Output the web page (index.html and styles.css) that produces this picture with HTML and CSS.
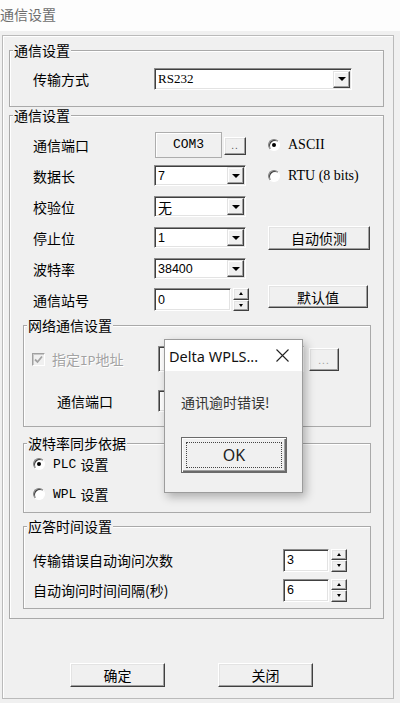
FILE: index.html
```html
<!DOCTYPE html>
<html lang="zh-CN">
<head>
    <meta charset="UTF-8">
    <meta name="viewport" content="width=device-width, initial-scale=1.0">
    <title>通信设置</title>
    <link rel="stylesheet" href="styles.css">
</head>
<body>
    <div class="titlebar">通信设置</div>

    <div class="frame">
        <fieldset class="group g-mode">
            <legend>通信设置</legend>
            <div class="body">
                <div class="row">
                    <span class="lbl">传输方式</span>
                    <div class="combo wide"><span class="val serif">RS232</span><span class="drop"></span></div>
                </div>
            </div>
        </fieldset>

        <fieldset class="group g-comm">
            <legend>通信设置</legend>
            <div class="body">
                <div class="row">
                    <span class="lbl">通信端口</span>
                    <div class="ctl">
                        <span class="com">COM3</span>
                        <span class="btn dots">..</span>
                    </div>
                    <span class="opt"><span class="rb on"></span><span class="serif">ASCII</span></span>
                </div>
                <div class="row">
                    <span class="lbl">数据长</span>
                    <div class="ctl"><div class="combo"><span class="val">7</span><span class="drop"></span></div></div>
                    <span class="opt"><span class="rb"></span><span class="serif">RTU (8 bits)</span></span>
                </div>
                <div class="row">
                    <span class="lbl">校验位</span>
                    <div class="ctl"><div class="combo"><span class="val cjk">无</span><span class="drop"></span></div></div>
                </div>
                <div class="row">
                    <span class="lbl">停止位</span>
                    <div class="ctl"><div class="combo"><span class="val">1</span><span class="drop"></span></div></div>
                    <span class="btn side">自动侦测</span>
                </div>
                <div class="row">
                    <span class="lbl">波特率</span>
                    <div class="ctl"><div class="combo"><span class="val">38400</span><span class="drop"></span></div></div>
                </div>
                <div class="row">
                    <span class="lbl">通信站号</span>
                    <div class="ctl">
                        <div class="spin">
                            <span class="edit station">0</span>
                            <span class="spinner"><span class="btn up"></span><span class="btn down"></span></span>
                        </div>
                    </div>
                    <span class="btn side default">默认值</span>
                </div>

                <fieldset class="group g-net">
                    <legend>网络通信设置</legend>
                    <div class="body">
                        <div class="row">
                            <span class="nlbl">
                                <span class="chk">
                                    <svg width="9" height="9" viewBox="0 0 9 9"><path d="M1 4.5 L3.5 7 L8 1.5" fill="none" stroke="#a3a3a3" stroke-width="1.8"/></svg>
                                </span>
                                <span class="dim">指定<span class="mono">IP</span>地址</span>
                            </span>
                            <span class="edit ip"></span>
                            <span class="btn browse">...</span>
                        </div>
                        <div class="row">
                            <span class="nlbl indent">通信端口</span>
                            <span class="edit port"></span>
                        </div>
                    </div>
                </fieldset>

                <fieldset class="group g-baud">
                    <legend>波特率同步依据</legend>
                    <div class="body">
                        <div class="row"><span class="rb on"></span><span class="mono">PLC</span>&nbsp;设置</div>
                        <div class="row"><span class="rb"></span><span class="mono">WPL</span>&nbsp;设置</div>
                    </div>
                </fieldset>

                <fieldset class="group g-resp">
                    <legend>应答时间设置</legend>
                    <div class="body">
                        <div class="row">
                            <span class="rlbl">传输错误自动询问次数</span>
                            <div class="spin">
                                <span class="edit small">3</span>
                                <span class="spinner"><span class="btn up"></span><span class="btn down"></span></span>
                            </div>
                        </div>
                        <div class="row">
                            <span class="rlbl">自动询问时间间隔(秒)</span>
                            <div class="spin">
                                <span class="edit small">6</span>
                                <span class="spinner"><span class="btn up"></span><span class="btn down"></span></span>
                            </div>
                        </div>
                    </div>
                </fieldset>
            </div>
        </fieldset>

        <div class="actions">
            <span class="btn action">确定</span>
            <span class="btn action">关闭</span>
        </div>
    </div>

    <div class="msgbox">
        <div class="msg-title">
            <span>Delta WPLS...</span>
            <svg width="13" height="13" viewBox="0 0 13 13"><path d="M0.5 0.5 L12.5 12.5 M12.5 0.5 L0.5 12.5" stroke="#222" stroke-width="1.1"/></svg>
        </div>
        <div class="msg-body">
            <p class="msg-text">通讯逾时错误!</p>
            <span class="ok"><span class="focus">OK</span></span>
        </div>
    </div>
</body>
</html>
```

FILE: styles.css
```css
body {
    margin: 0;
    width: 400px;
    height: 703px;
    overflow: hidden;
    position: relative;
    background-color: #f0f0f0;
    font-family: "Noto Sans CJK SC", sans-serif;
    font-size: 14px;
    color: #000;
}
.titlebar {
    height: 31px;
    line-height: 29px;
    background-color: #fdfdfd;
    color: #6e6e6e;
}
.frame {
    box-sizing: border-box;
    width: 392px;
    margin: 4px 0 0 2px;
    padding: 7px 9px 11px 6px;
    border: 1px solid #bababa;
    box-shadow: inset 1px 1px #fff;
}
.serif {
    font-family: "Liberation Serif", serif;
}
.mono {
    font-family: "Liberation Mono", monospace;
    font-size: 13px;
}

/* group boxes */
.group {
    margin: 0;
    padding: 0;
    min-width: 0;
    border: 1px solid #a9a9a9;
    box-shadow: inset 1px 1px #fff;
}
.group legend {
    margin-left: 3px;
    padding: 0 1px;
    line-height: 15px;
    background-color: #f0f0f0;
}
.row {
    display: flex;
    align-items: center;
    height: 31px;
}
.lbl {
    width: 121px;
    flex: none;
}
.ctl {
    width: 114px;
    flex: none;
    display: flex;
    align-items: center;
}

.g-mode .body {
    padding: 10px 0 16px 23px;
}
.g-mode .row {
    height: 22px;
}
.g-comm {
    margin-top: 1px;
}
.g-comm > .body {
    padding: 6px 12px 9px 13px;
}
.g-comm > .body > .row {
    padding-left: 10px;
}

/* inputs */
.combo,
.edit {
    box-sizing: border-box;
    display: flex;
    align-items: center;
    background-color: #fff;
    border: 1px solid;
    border-color: #8c8c8c #fff #fff #8c8c8c;
    box-shadow: inset 1px 1px #404040, inset -1px -1px #e3e3e3;
    font-family: "Liberation Sans", sans-serif;
    font-size: 12.5px;
}
.combo {
    width: 92px;
    height: 21px;
}
.combo.wide {
    width: 198px;
    height: 22px;
}
.combo .val {
    flex: 1;
    padding-left: 3px;
}
.combo .val.serif {
    font-family: "Liberation Serif", serif;
    font-size: 13px;
}
.combo .val.cjk {
    font-family: "Noto Sans CJK SC", sans-serif;
    font-size: 14px;
}
.btn {
    box-sizing: border-box;
    display: flex;
    align-items: center;
    justify-content: center;
    background-color: #f0f0f0;
    border: 1px solid;
    border-color: #fff #404040 #404040 #fff;
    box-shadow: inset -1px -1px #a0a0a0, inset 1px 1px #e3e3e3;
}
.drop {
    box-sizing: border-box;
    width: 17px;
    height: 17px;
    margin-right: 1px;
    display: flex;
    align-items: center;
    justify-content: center;
    background-color: #f0f0f0;
    border: 1px solid;
    border-color: #e3e3e3 #404040 #404040 #e3e3e3;
    box-shadow: inset -1px -1px #a0a0a0, inset 1px 1px #fff;
}
.drop::after {
    content: "";
    border-left: 4px solid transparent;
    border-right: 4px solid transparent;
    border-top: 4px solid #000;
}
.com {
    box-sizing: border-box;
    width: 67px;
    height: 26px;
    margin-left: 1px;
    display: flex;
    align-items: center;
    justify-content: center;
    border: 1px solid #adadad;
    box-shadow: inset 1px 1px #fff;
    font-family: "Liberation Mono", monospace;
    font-size: 13px;
}
.dots {
    width: 22px;
    height: 18px;
    margin: 2px 0 0 2px;
    font-family: "Liberation Sans", sans-serif;
    font-size: 10px;
    color: #555;
    letter-spacing: 1px;
}

/* radio, checkbox */
.opt {
    display: flex;
    align-items: center;
    font-size: 14px;
}
.rb {
    box-sizing: border-box;
    position: relative;
    width: 12px;
    height: 12px;
    flex: none;
    margin-right: 8px;
    border-radius: 50%;
    background-color: #fff;
    border: 1px solid;
    border-color: #808080 #fff #fff #808080;
    box-shadow: inset 1px 1px #404040;
}
.opt .rb {
    margin-right: 8px;
}
.rb.on::after {
    content: "";
    position: absolute;
    left: 3px;
    top: 3px;
    width: 4px;
    height: 4px;
    border-radius: 50%;
    background-color: #000;
}
.side {
    width: 102px;
    height: 24px;
}
.side.default {
    width: 100px;
    height: 23px;
    align-self: flex-start;
    margin-top: 1px;
}

/* spin boxes */
.spin {
    display: flex;
    height: 23px;
}
.spin .edit {
    height: 23px;
    padding-left: 3px;
}
.station {
    width: 77px;
}
.edit.small {
    width: 46px;
}
.spinner {
    width: 16px;
    margin-left: 2px;
    display: flex;
    flex-direction: column;
}
.spinner .btn {
    flex: 1;
}
.up::after,
.down::after {
    content: "";
    border-left: 2.5px solid transparent;
    border-right: 2.5px solid transparent;
}
.up::after {
    border-bottom: 3px solid #000;
}
.down::after {
    border-top: 3px solid #000;
}

/* network */
.g-net {
    margin-top: 3px;
}
.g-net .body {
    padding: 11px 0 10px 8px;
}
.g-net .row {
    height: 30px;
}
.g-net .row + .row {
    margin-top: 12px;
}
.nlbl {
    width: 126px;
    flex: none;
    display: flex;
    align-items: center;
}
.nlbl.indent {
    box-sizing: border-box;
    padding-left: 25px;
}
.chk {
    box-sizing: border-box;
    width: 13px;
    height: 13px;
    margin-right: 7px;
    display: flex;
    align-items: center;
    justify-content: center;
    background-color: #f0f0f0;
    border: 1px solid;
    border-color: #a0a0a0 #fff #fff #a0a0a0;
    box-shadow: inset 1px 1px #c8c8c8;
}
.dim {
    color: #a3a3a3;
    text-shadow: 1px 1px #fff;
}
.edit.ip {
    width: 146px;
    height: 26px;
}
.browse {
    width: 30px;
    height: 23px;
    margin-left: 5px;
    font-size: 10px;
    color: #a0a0a0;
    letter-spacing: 1px;
}
.edit.port {
    width: 100px;
    height: 22px;
}

/* baud sync */
.g-baud {
    margin-top: 9px;
}
.g-baud .body {
    margin-top: -2px;
    padding: 0 0 3px 9px;
}
.g-baud .row {
    height: 30px;
}
.g-baud .mono {
    margin-right: 1px;
}

/* response time */
.g-resp {
    margin-top: 6px;
}
.g-resp .body {
    padding: 11px 0 3px 9px;
}
.g-resp .row {
    height: 30px;
}
.rlbl {
    width: 250px;
    flex: none;
}

.actions {
    display: flex;
    gap: 53px;
    margin-top: 44px;
    padding-left: 61px;
}
.action {
    width: 95px;
    height: 24px;
}

/* message box */
.msgbox {
    position: absolute;
    left: 164px;
    top: 339px;
    width: 139px;
    height: 154px;
    box-sizing: border-box;
    background-color: #f0f0f0;
    border: 1px solid #9c9c9c;
    box-shadow: 3px 4px 9px rgba(0, 0, 0, 0.28);
}
.msg-title {
    height: 31px;
    display: flex;
    align-items: center;
    justify-content: space-between;
    padding: 0 13px 0 4px;
    background-color: #fff;
    font-family: "Noto Sans", sans-serif;
    font-size: 14.5px;
    color: #111;
}
.msg-body {
    padding: 23px 0 0 16px;
}
.msg-text {
    margin: 0;
    line-height: 16px;
    color: #333;
}
.ok {
    box-sizing: border-box;
    width: 106px;
    height: 36px;
    margin-top: 27px;
    padding: 4px;
    display: flex;
    border: 1px solid #6a6a6a;
    background-color: #f0f0f0;
    box-shadow: inset 1px 1px #fff, inset -1px -1px #6a6a6a, inset -2px -2px #a0a0a0;
}
.focus {
    flex: 1;
    display: flex;
    align-items: center;
    justify-content: center;
    border: 1px dotted #444;
    font-family: "Noto Sans", sans-serif;
    font-size: 16px;
    color: #222;
}
```
